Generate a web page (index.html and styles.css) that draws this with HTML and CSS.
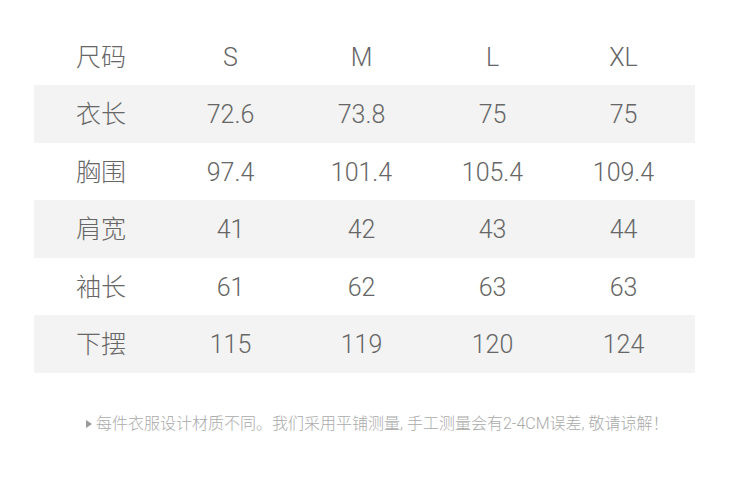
FILE: index.html
```html
<!DOCTYPE html>
<html lang="zh">
<head>
<meta charset="utf-8">
<link rel="stylesheet" href="styles.css">
</head>
<body>
<div class="page">
  <div class="table">
    <div class="row">
      <div class="cell label">尺码</div><div class="cell">S</div><div class="cell">M</div><div class="cell">L</div><div class="cell">XL</div>
    </div>
    <div class="row shaded">
      <div class="cell label">衣长</div><div class="cell">72.6</div><div class="cell">73.8</div><div class="cell">75</div><div class="cell">75</div>
    </div>
    <div class="row">
      <div class="cell label">胸围</div><div class="cell">97.4</div><div class="cell">101.4</div><div class="cell">105.4</div><div class="cell">109.4</div>
    </div>
    <div class="row shaded">
      <div class="cell label">肩宽</div><div class="cell">41</div><div class="cell">42</div><div class="cell">43</div><div class="cell">44</div>
    </div>
    <div class="row">
      <div class="cell label">袖长</div><div class="cell">61</div><div class="cell">62</div><div class="cell">63</div><div class="cell">63</div>
    </div>
    <div class="row shaded">
      <div class="cell label">下摆</div><div class="cell">115</div><div class="cell">119</div><div class="cell">120</div><div class="cell">124</div>
    </div>
  </div>
  <p class="note"><span class="arrow"></span>每件衣服设计材质不同。我们采用平铺测量, 手工测量会有2-4CM误差, 敬请谅解！</p>
</div>
</body>
</html>
```

FILE: styles.css
```css
html, body {
  margin: 0;
  padding: 0;
  background: #fff;
}
.page {
  width: 750px;
  height: 491px;
  padding-top: 27.5px;
  box-sizing: border-box;
  font-family: Roboto, "Noto Sans CJK SC", sans-serif;
}
.table {
  margin-left: 34px;
  width: 661px;
}
.row {
  display: grid;
  grid-template-columns: 131px 131px 131px 131px 131px 6px;
  height: 57.5px;
  align-items: center;
}
.row.shaded {
  background: #f3f3f3;
}
.cell {
  text-align: center;
  font-size: 25px;
  font-weight: 300;
  color: #666;
  line-height: 30px;
  padding-top: 3px;
}
.cell.label {
  padding-left: 3px;
}
.note {
  margin: 41px 0 0 86px;
  font-size: 16px;
  color: #aaa;
  font-weight: 300;
  line-height: 20px;
  display: flex;
  align-items: center;
}
.arrow {
  width: 0;
  height: 0;
  border-left: 6px solid #999;
  border-top: 4.5px solid transparent;
  border-bottom: 4.5px solid transparent;
  margin-right: 4px;
}
```
